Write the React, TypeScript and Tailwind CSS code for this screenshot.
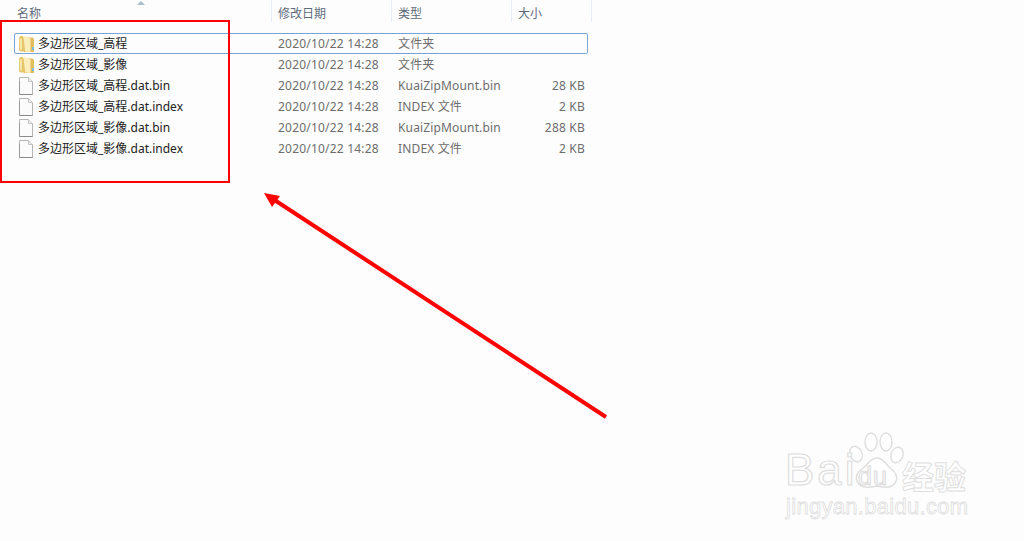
const FONT = "font-['Noto_Sans','Noto_Sans_CJK_SC',sans-serif]"

const COLUMNS = [
  { label: '修改日期', width: 'w-[120px]' },
  { label: '类型', width: 'w-[120px]' },
  { label: '大小', width: 'w-[80px]' },
]

const FILES = [
  { name: '多边形区域_高程', type: '文件夹', size: '', folder: true, selected: true },
  { name: '多边形区域_影像', type: '文件夹', size: '', folder: true },
  { name: '多边形区域_高程.dat.bin', type: 'KuaiZipMount.bin', size: '28 KB' },
  { name: '多边形区域_高程.dat.index', type: 'INDEX 文件', size: '2 KB' },
  { name: '多边形区域_影像.dat.bin', type: 'KuaiZipMount.bin', size: '288 KB' },
  { name: '多边形区域_影像.dat.index', type: 'INDEX 文件', size: '2 KB' },
]

function FolderIcon() {
  return (
    <svg width="16" height="18" viewBox="0 0 16 18" aria-hidden>
      <path d="M0 2.500 1.500 1h2L5 2.500V16.500H1.500L0 15Z" fill="#e6c468" />
      <path d="M5 2.500h8.500L15 4v13H5Z" fill="#e2bc5e" />
      <path d="M4.500 1.500 6 1l5.500 2.500V17L6 16.500Z" fill="#fbeebb" />
      <path d="M.5 3.500h2.500v11H1Z" fill="#f9e7a8" />
      <rect x="13" y="12" width="2" height="3" fill="#7dbbe0" />
    </svg>
  )
}

function FileIcon() {
  return (
    <svg width="14" height="18" viewBox="0 0 14 18" aria-hidden>
      <path d="M.5.500h9l4 4v13H.5Z" fill="#fbfbfb" stroke="#b5b5b5" />
      <path d="M9.500.500v4h4" fill="#eeeeee" stroke="#c4c4c4" />
      <path d="M.5 17.500h13" stroke="#8a8a8a" />
      <path d="M.5 4v13.500" stroke="#9a9a9a" />
    </svg>
  )
}

function Watermark() {
  return (
    <div className="absolute left-[785px] top-[431px] h-[90px] w-[190px] text-white [-webkit-text-stroke:1.2px_#dedede]">
      <svg className="absolute left-[63px] top-0" width="62" height="62" viewBox="0 0 62 62" fill="#ffffff" stroke="#dedede" strokeWidth="1.400" aria-hidden>
        <ellipse cx="8" cy="23" rx="6" ry="8" transform="rotate(-25 8 23)" />
        <ellipse cx="23" cy="11" rx="6" ry="9" />
        <ellipse cx="38" cy="11" rx="6" ry="9" />
        <ellipse cx="49" cy="24" rx="6" ry="8" transform="rotate(20 49 24)" />
        <path d="M29 27c7 0 9 7 14 11 6 4 7 10 4 14-4 5-9 5-18 3-9 2-15 2-19-3-3-4-2-10 4-14 6-4 8-11 15-11Z" />
      </svg>
      <span className="absolute left-0 top-[11px] font-['Liberation_Sans',sans-serif] text-[44px] leading-[56px] tracking-[3px]">
        Bai
      </span>
      <span className="absolute left-[73px] top-[31px] font-['Liberation_Sans',sans-serif] text-[25px] leading-[28px] tracking-[1px]">
        du
      </span>
      <span className="absolute left-[117px] top-[25px] font-['Noto_Sans_CJK_SC',sans-serif] text-[32px] leading-[38px] font-bold [-webkit-text-stroke-width:0.9px]">
        经验
      </span>
      <span className="absolute left-[1px] top-[63px] font-['Liberation_Sans',sans-serif] text-[22px] leading-[26px] tracking-[0.3px] whitespace-nowrap [-webkit-text-stroke-width:0.8px]">
        jingyan.baidu.com
      </span>
    </div>
  )
}

export default function App() {
  return (
    <div className={`relative h-[541px] w-[1024px] overflow-hidden bg-[#fdfdfd] text-xs ${FONT}`}>
      <header className="relative flex h-[22px] pl-[17px] text-[#5e6b7a]">
        <div className="w-[255px] border-r border-[#e8edf3] pt-[5px] leading-[18px]">名称</div>
        {COLUMNS.map((col) => (
          <div key={col.label} className={`${col.width} border-r border-[#e8edf3] pl-[6px] pt-[5px] leading-[18px]`}>
            {col.label}
          </div>
        ))}
        <svg className="absolute left-[137px] top-px" width="8" height="4" viewBox="0 0 8 4" aria-hidden>
          <path d="M4 0 8 4H0Z" fill="#a9bdd0" />
        </svg>
      </header>

      <div className="ml-[14px] mt-[11px] w-[574px]">
        {FILES.map((file) => (
          <div
            key={file.name}
            className={`flex h-[21px] items-center rounded-[2px] border ${
              file.selected ? 'border-[#7aa3d8]' : 'border-transparent'
            }`}
          >
            <div className="flex w-[256px] items-center pl-[2px] text-[#222222]">
              <span className="flex w-[21px] justify-start pl-[2px]">
                {file.folder ? <FolderIcon /> : <FileIcon />}
              </span>
              <span className="whitespace-nowrap">{file.name}</span>
            </div>
            <div className="ml-[7px] w-[120px] whitespace-nowrap tracking-[0.2px] text-[#6d6d6d]">2020/10/22 14:28</div>
            <div className="w-[100px] whitespace-nowrap tracking-[0.15px] text-[#6d6d6d]">{file.type}</div>
            <div className="w-[87px] whitespace-nowrap text-right tracking-[0.2px] text-[#6d6d6d]">{file.size}</div>
          </div>
        ))}
      </div>

      {/* annotations on top of the screenshot */}
      <div className="absolute left-0 top-[20px] h-[163px] w-[230px] border-2 border-[#ff0000]" />
      <svg className="absolute left-0 top-0" width="1024" height="541" aria-hidden>
        <path d="M606 417 273 199" stroke="#ff0000" strokeWidth="4" fill="none" />
        <path d="M264 193 280 196 272 207Z" fill="#ff0000" />
      </svg>

      <Watermark />
    </div>
  )
}
